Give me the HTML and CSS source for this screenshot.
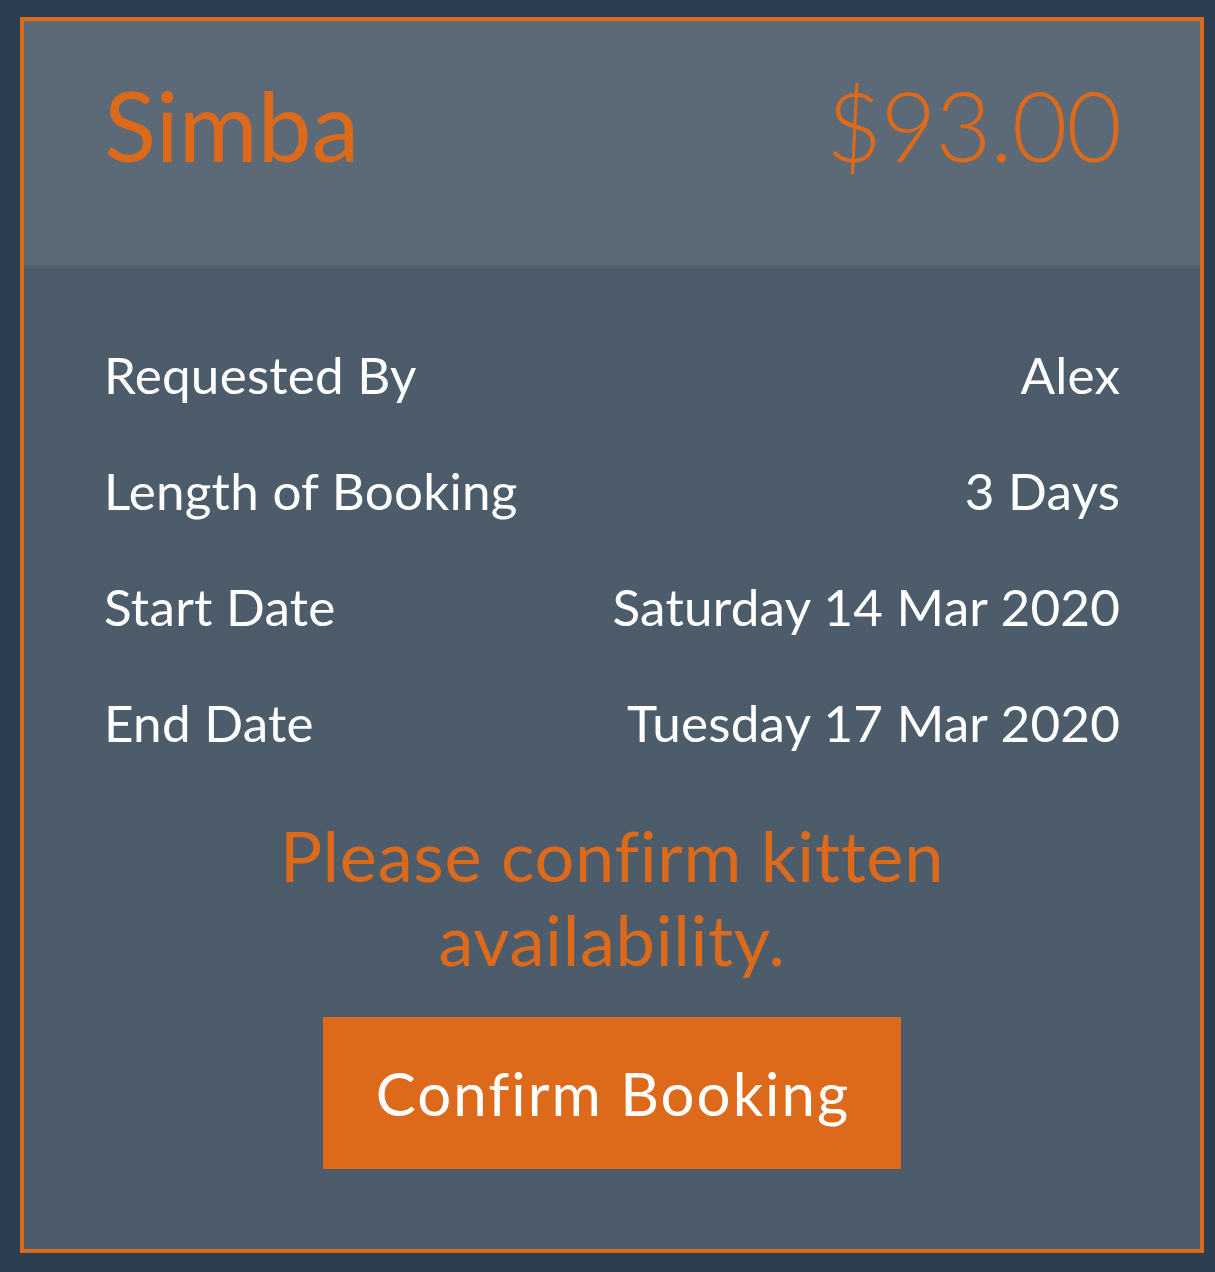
FILE: index.html
```html
<!DOCTYPE html>
<html lang="en">
<head>
<meta charset="utf-8">
<title>Booking</title>
<link rel="stylesheet" href="styles.css">
</head>
<body>
<div class="page">
  <section class="card">
    <header class="card-head">
      <h1 class="name">Simba</h1>
      <div class="price">$93.00</div>
    </header>
    <div class="card-body">
      <dl class="details">
        <div class="row"><dt>Requested By</dt><dd>Alex</dd></div>
        <div class="row"><dt>Length of Booking</dt><dd>3 Days</dd></div>
        <div class="row"><dt>Start Date</dt><dd>Saturday 14 Mar 2020</dd></div>
        <div class="row"><dt>End Date</dt><dd>Tuesday 17 Mar 2020</dd></div>
      </dl>
      <p class="notice">Please confirm kitten<br>availability.</p>
      <div class="actions">
        <button class="confirm" type="button">Confirm Booking</button>
      </div>
    </div>
  </section>
</div>
</body>
</html>
```

FILE: styles.css
```css
html, body {
  margin: 0;
  padding: 0;
  background: #2b3d4f;
}
body {
  font-family: Lato, "Open Sans", sans-serif;
  color: #ffffff;
}
.page {
  padding: 17px 11px 19px 20px;
}
.card {
  border: 4px solid #dd6a1b;
  background: #4d5c6b;
}
.card-head {
  background: #5c6976;
  border-bottom: 3px solid #56636f;
  display: flex;
  justify-content: space-between;
  align-items: flex-start;
  padding: 46px 80px 0 80px;
  height: 198px;
}
.name {
  margin: 0;
  font-size: 96px;
  font-weight: 400;
  line-height: 1.2;
  color: #dd6a1b;
}
.price {
  font-size: 96px;
  font-weight: 300;
  line-height: 1.2;
  letter-spacing: -1px;
  margin-right: -1px;
  color: #dd6a1b;
}
.card-body {
  padding: 76px 80px 80px 80px;
}
.details {
  margin: 0;
  display: flex;
  flex-direction: column;
  gap: 54.6px;
}
.row {
  display: flex;
  justify-content: space-between;
  font-size: 51.2px;
  line-height: 1.2;
  letter-spacing: 0.25px;
}
.row dt, .row dd {
  margin: 0;
}
.row dd {
  margin-right: -0.25px;
}
.notice {
  margin: 59px 0 0 0;
  text-align: center;
  font-size: 70.4px;
  line-height: 1.2;
  letter-spacing: 0.65px;
  color: #dd6a1b;
}
.actions {
  display: flex;
  justify-content: center;
  margin-top: 35px;
}
.confirm {
  font-family: Lato, "Open Sans", sans-serif;
  font-size: 60px;
  line-height: 1.2;
  letter-spacing: 2px;
  color: #ffffff;
  background: #dd6a1b;
  border: none;
  border-radius: 0;
  padding: 40px 51px 40px 53px;
  margin: 0;
}
```
